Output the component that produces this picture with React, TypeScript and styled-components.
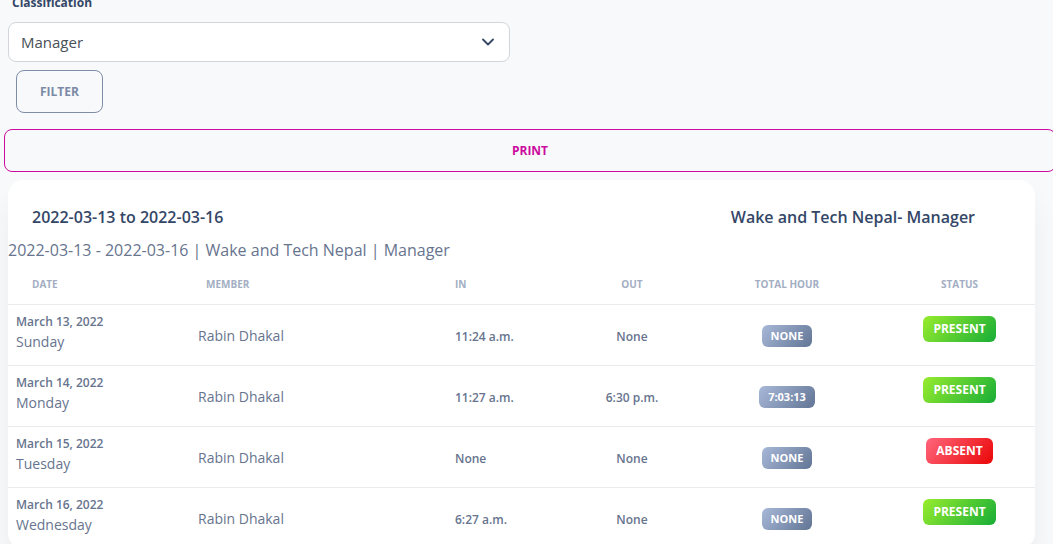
import React from 'react';
import styled, { createGlobalStyle } from 'styled-components';

const palette = {
  heading: '#344767',
  text: '#67748e',
  muted: '#a3aec2',
  border: '#e9ecef',
  primary: '#cb0c9f',
  page: '#f8f9fa',
};

const GlobalStyle = createGlobalStyle`
  html, body {
    margin: 0;
    padding: 0;
    background: ${palette.page};
    font-family: 'Open Sans', 'Noto Sans', sans-serif;
    overflow: hidden;
  }
`;

const Page = styled.div`
  margin-top: -6px;
  padding: 0 0 0 8px;
`;

const Label = styled.label`
  display: block;
  padding-left: 4px;
  font-size: 12px;
  line-height: 18px;
  font-weight: 700;
  color: ${palette.heading};
`;

const Select = styled.div`
  margin-top: 10px;
  width: 502px;
  height: 40px;
  box-sizing: border-box;
  border: 1px solid #d2d6da;
  border-radius: 8px;
  background: #fff;
  display: flex;
  align-items: center;
  justify-content: space-between;
  padding: 0 15px 0 12px;
  font-size: 15px;
  color: #495057;
`;

const FilterButton = styled.button`
  margin: 8px 0 0 8px;
  width: 87px;
  height: 43px;
  border: 1px solid #7f8da8;
  border-radius: 8px;
  background: transparent;
  font-family: inherit;
  font-size: 12px;
  font-weight: 700;
  color: #7b8aa6;
  display: block;
`;

const PrintButton = styled.button`
  display: block;
  margin: 16px 0 0 -4px;
  width: 1052px;
  height: 43px;
  border: 1px solid ${palette.primary};
  border-radius: 8px;
  background: transparent;
  font-family: inherit;
  font-size: 12px;
  font-weight: 700;
  color: ${palette.primary};
`;

const Card = styled.div`
  margin-top: 8px;
  width: 1027px;
  background: #fff;
  border-radius: 16px;
  padding-top: 24px;
  box-shadow: 0 20px 27px rgba(0, 0, 0, 0.05);
`;

const TitleRow = styled.div`
  display: flex;
  justify-content: space-between;
  padding: 0 60px 0 24px;
`;

const Title = styled.h6`
  margin: 0;
  font-size: 16px;
  line-height: 26px;
  font-weight: 600;
  color: ${palette.heading};
`;

const Subtitle = styled.p`
  margin: 7px 0 0;
  font-size: 16px;
  line-height: 26px;
  color: ${palette.text};
`;

const Table = styled.table`
  width: 1027px;
  table-layout: fixed;
  border-collapse: collapse;
`;

const Th = styled.th<{ $align?: string; $pad?: number }>`
  text-align: ${(p) => p.$align || 'left'};
  padding: 14px ${(p) => (p.$align === 'center' ? 0 : p.$pad ?? 24)}px 12px;
  font-size: 10px;
  line-height: 15px;
  font-weight: 700;
  text-transform: uppercase;
  color: ${palette.muted};
  border-bottom: 1px solid ${palette.border};
`;

const Td = styled.td<{ $align?: string; $top?: boolean }>`
  height: 61px;
  box-sizing: border-box;
  text-align: ${(p) => p.$align || 'left'};
  vertical-align: ${(p) => (p.$top ? 'top' : 'middle')};
  padding: ${(p) => (p.$top ? '8px' : '0 8px')};
  border-bottom: 1px solid ${palette.border};
  color: ${palette.text};
`;

const DateText = styled.div`
  font-size: 12px;
  line-height: 18px;
  font-weight: 600;
`;

const DayText = styled.div`
  font-size: 14px;
  line-height: 21px;
`;

const Member = styled.span`
  font-size: 14px;
`;

const Time = styled.span`
  font-size: 12px;
  font-weight: 600;
`;

const gradients = {
  secondary: 'linear-gradient(310deg, #627594, #a8b8d8)',
  success: 'linear-gradient(310deg, #17ad37, #98ec2d)',
  danger: 'linear-gradient(310deg, #ea0606, #ff667c)',
};

const Badge = styled.span<{ $tone: keyof typeof gradients; $big?: boolean }>`
  display: inline-block;
  background-image: ${(p) => gradients[p.$tone]};
  color: #fff;
  font-weight: 700;
  text-transform: uppercase;
  border-radius: 6px;
  font-size: ${(p) => (p.$big ? 12 : 11)}px;
  line-height: ${(p) => (p.$big ? 14 : 12)}px;
  padding: ${(p) => (p.$big ? '6px 10px' : '5px 9px')};
`;

const StatusCell = styled(Td)`
  padding: 11px 6px 0 0;
`;

const Chevron = () => (
  <svg width="12" height="8" viewBox="0 0 12 8" fill="none">
    <path d="M1 1.5l5 5 5-5" stroke="#344767" strokeWidth="1.8" strokeLinecap="round" strokeLinejoin="round" />
  </svg>
);

type Row = {
  date: string;
  day: string;
  inTime: string;
  outTime: string;
  total: string;
  present: boolean;
};

const rows: Row[] = [
  { date: 'March 13, 2022', day: 'Sunday', inTime: '11:24 a.m.', outTime: 'None', total: 'None', present: true },
  { date: 'March 14, 2022', day: 'Monday', inTime: '11:27 a.m.', outTime: '6:30 p.m.', total: '7:03:13', present: true },
  { date: 'March 15, 2022', day: 'Tuesday', inTime: 'None', outTime: 'None', total: 'None', present: false },
  { date: 'March 16, 2022', day: 'Wednesday', inTime: '6:27 a.m.', outTime: 'None', total: 'None', present: true },
];

export default function App() {
  return (
    <Page>
      <GlobalStyle />
      <Label>Classification</Label>
      <Select>
        <span>Manager</span>
        <Chevron />
      </Select>
      <FilterButton>FILTER</FilterButton>
      <PrintButton>PRINT</PrintButton>
      <Card>
        <TitleRow>
          <Title>2022-03-13 to 2022-03-16</Title>
          <Title>Wake and Tech Nepal- Manager</Title>
        </TitleRow>
        <Subtitle>2022-03-13 - 2022-03-16 | Wake and Tech Nepal | Manager</Subtitle>
        <Table>
          <colgroup>
            <col style={{ width: 182 }} />
            <col style={{ width: 257 }} />
            <col style={{ width: 133 }} />
            <col style={{ width: 104 }} />
            <col style={{ width: 206 }} />
            <col style={{ width: 145 }} />
          </colgroup>
          <thead>
            <tr>
              <Th>Date</Th>
              <Th $pad={16}>Member</Th>
              <Th $pad={8}>In</Th>
              <Th $align="center">Out</Th>
              <Th $align="center">Total Hour</Th>
              <Th $align="center" style={{ paddingRight: 6 }}>Status</Th>
            </tr>
          </thead>
          <tbody>
            {rows.map((r) => (
              <tr key={r.date}>
                <Td $top>
                  <DateText>{r.date}</DateText>
                  <DayText>{r.day}</DayText>
                </Td>
                <Td>
                  <Member>Rabin Dhakal</Member>
                </Td>
                <Td>
                  <Time>{r.inTime}</Time>
                </Td>
                <Td $align="center">
                  <Time>{r.outTime}</Time>
                </Td>
                <Td $align="center">
                  <Badge $tone="secondary">{r.total}</Badge>
                </Td>
                <StatusCell $align="center" $top>
                  <Badge $tone={r.present ? 'success' : 'danger'} $big>
                    {r.present ? 'Present' : 'Absent'}
                  </Badge>
                </StatusCell>
              </tr>
            ))}
          </tbody>
        </Table>
      </Card>
    </Page>
  );
}
